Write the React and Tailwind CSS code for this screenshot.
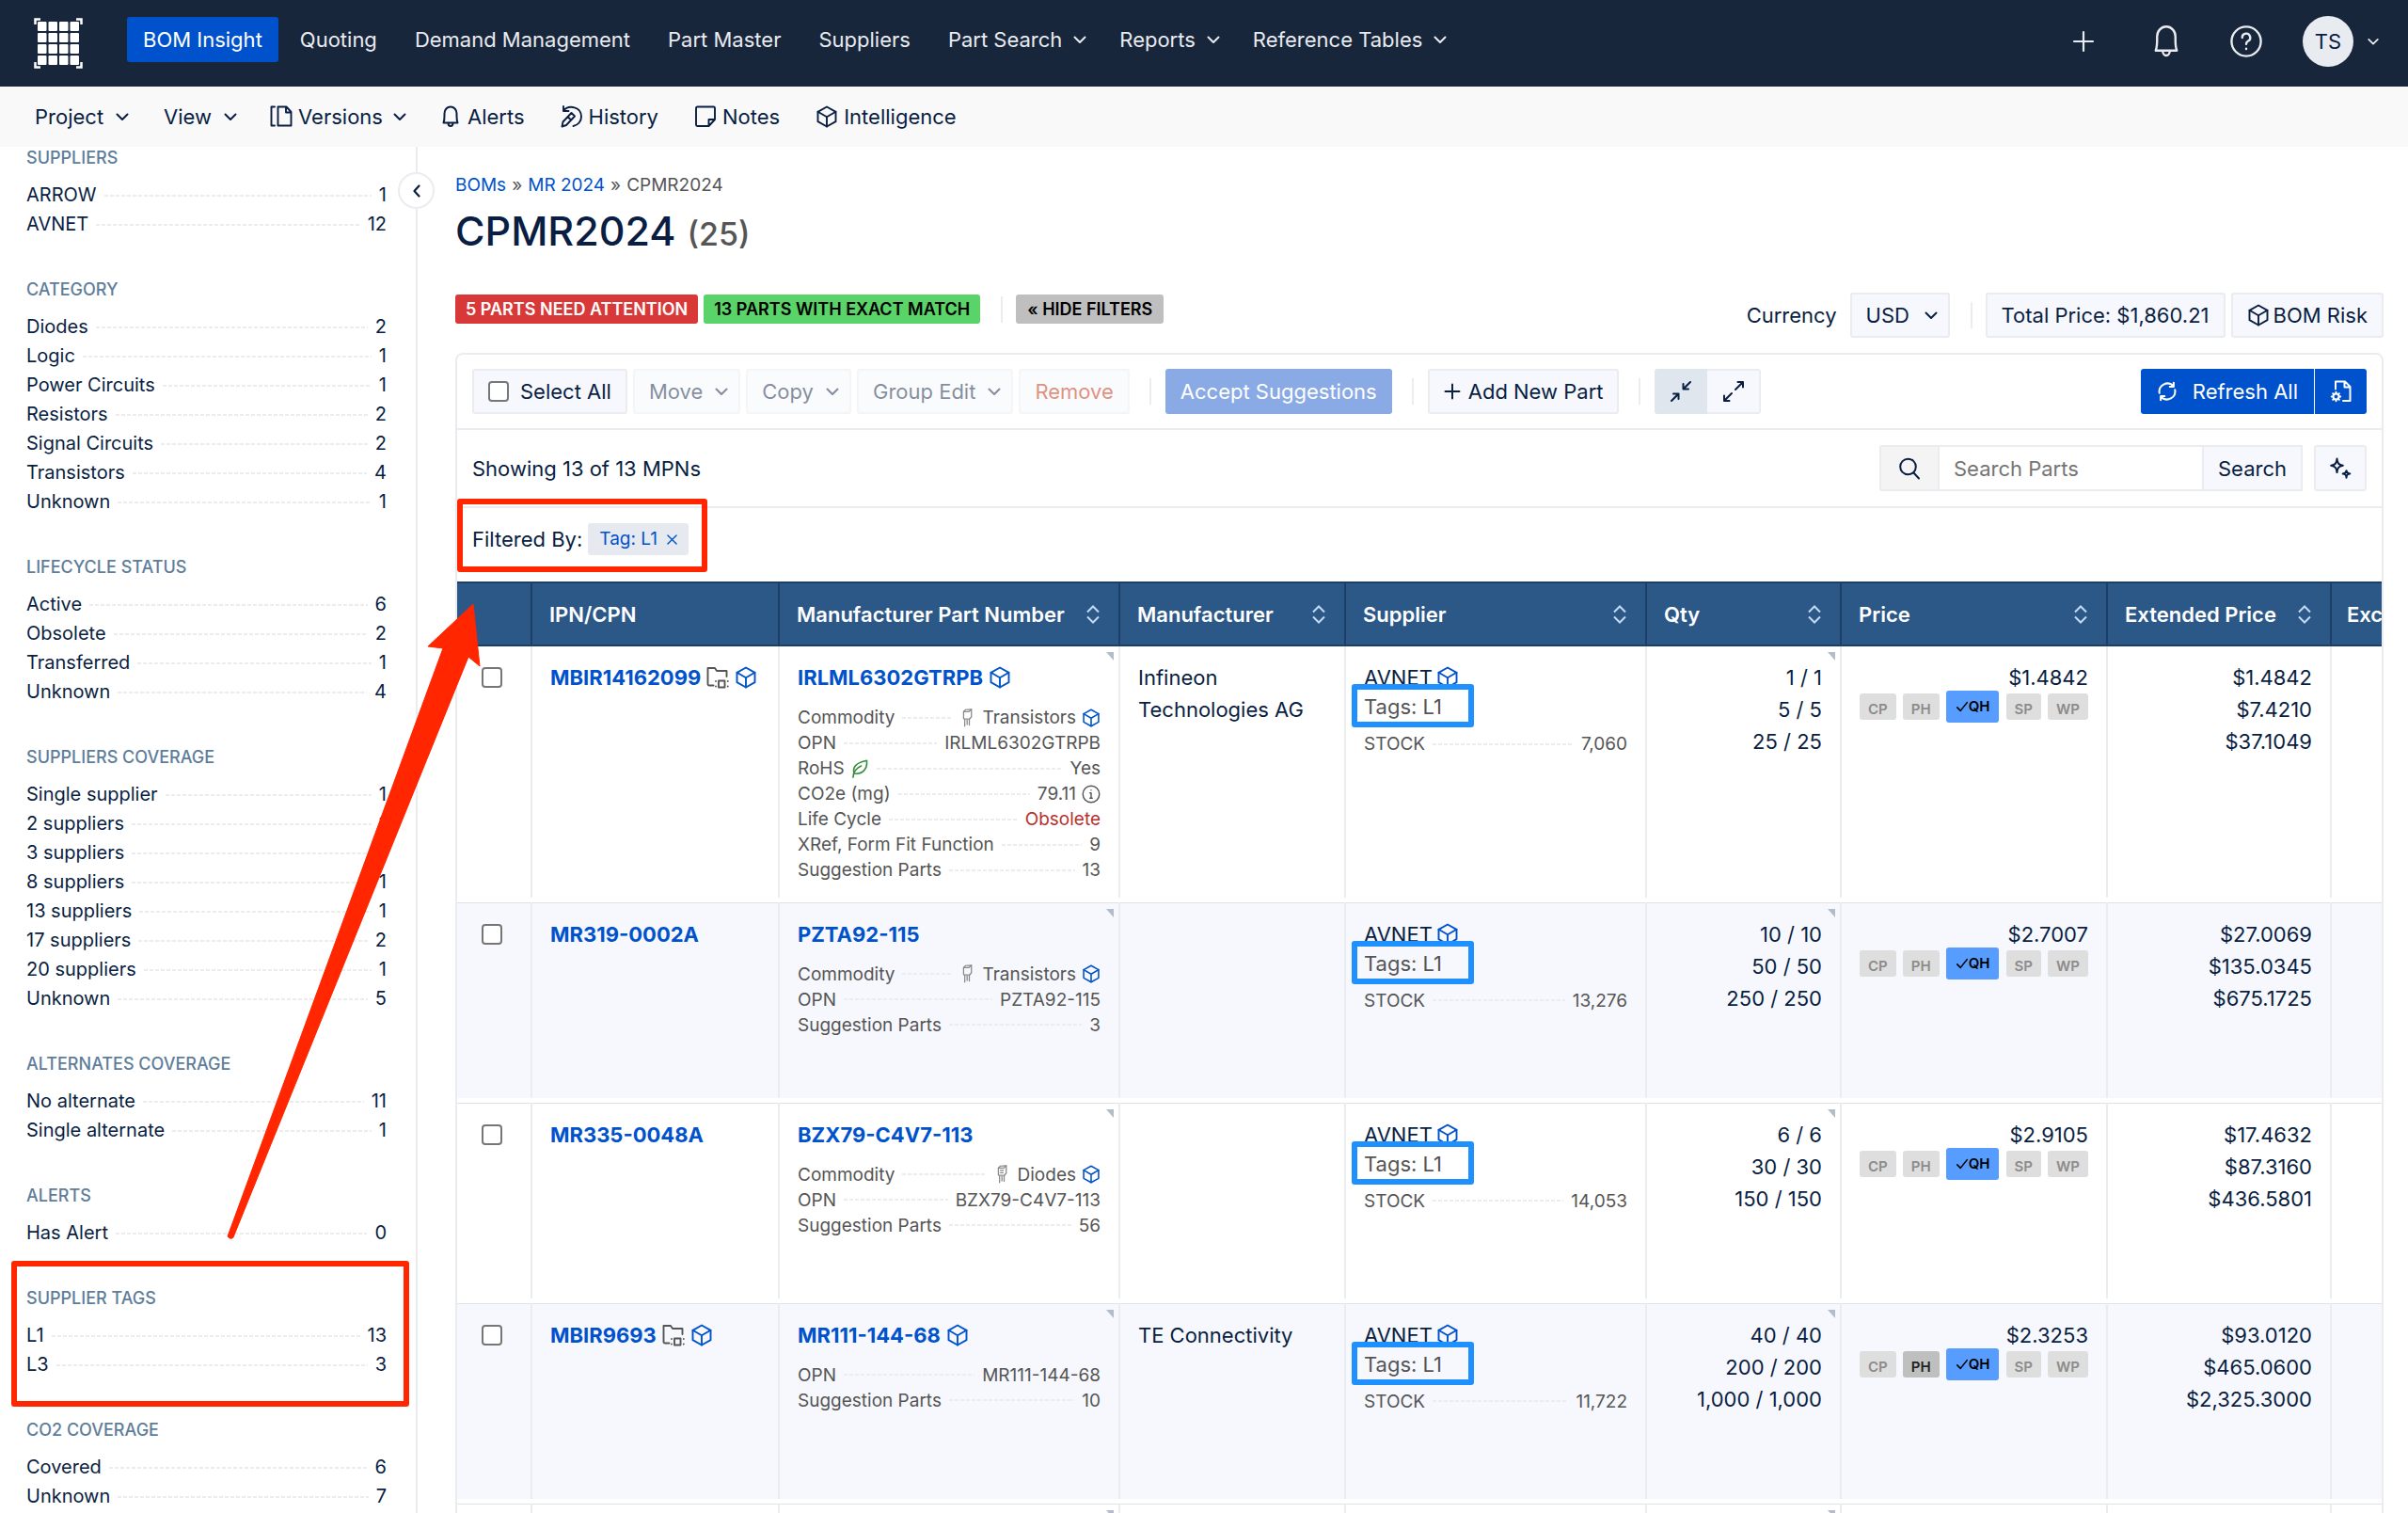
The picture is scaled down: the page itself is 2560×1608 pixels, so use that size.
const filterGroups = [
  { title: "Suppliers", items: [["ARROW", 1], ["AVNET", 12]] },
  {
    title: "Category",
    items: [
      ["Diodes", 2],
      ["Logic", 1],
      ["Power Circuits", 1],
      ["Resistors", 2],
      ["Signal Circuits", 2],
      ["Transistors", 4],
      ["Unknown", 1],
    ],
  },
  {
    title: "Lifecycle Status",
    items: [["Active", 6], ["Obsolete", 2], ["Transferred", 1], ["Unknown", 4]],
  },
  {
    title: "Suppliers Coverage",
    items: [
      ["Single supplier", 1],
      ["2 suppliers", 1],
      ["3 suppliers", 1],
      ["8 suppliers", 1],
      ["13 suppliers", 1],
      ["17 suppliers", 2],
      ["20 suppliers", 1],
      ["Unknown", 5],
    ],
  },
  { title: "Alternates Coverage", items: [["No alternate", 11], ["Single alternate", 1]] },
  { title: "Alerts", items: [["Has Alert", 0]] },
  { title: "Supplier Tags", items: [["L1", 13], ["L3", 3]], marked: true },
  { title: "CO2 Coverage", items: [["Covered", 6], ["Unknown", 7]] },
];

const parts = [
  {
    ipn: "MBIR14162099",
    linked: true,
    mpn: "IRLML6302GTRPB",
    mpnCube: true,
    manufacturer: "Infineon Technologies AG",
    details: [
      { label: "Commodity", value: "Transistors", kind: "transistor" },
      { label: "OPN", value: "IRLML6302GTRPB" },
      { label: "RoHS", value: "Yes", kind: "rohs" },
      { label: "CO2e (mg)", value: "79.11", kind: "info" },
      { label: "Life Cycle", value: "Obsolete", kind: "danger" },
      { label: "XRef, Form Fit Function", value: "9" },
      { label: "Suggestion Parts", value: "13" },
    ],
    stock: "7,060",
    qty: ["1 / 1", "5 / 5", "25 / 25"],
    price: "$1.4842",
    extended: ["$1.4842", "$7.4210", "$37.1049"],
  },
  {
    ipn: "MR319-0002A",
    mpn: "PZTA92-115",
    details: [
      { label: "Commodity", value: "Transistors", kind: "transistor" },
      { label: "OPN", value: "PZTA92-115" },
      { label: "Suggestion Parts", value: "3" },
    ],
    stock: "13,276",
    qty: ["10 / 10", "50 / 50", "250 / 250"],
    price: "$2.7007",
    extended: ["$27.0069", "$135.0345", "$675.1725"],
  },
  {
    ipn: "MR335-0048A",
    mpn: "BZX79-C4V7-113",
    details: [
      { label: "Commodity", value: "Diodes", kind: "diode" },
      { label: "OPN", value: "BZX79-C4V7-113" },
      { label: "Suggestion Parts", value: "56" },
    ],
    stock: "14,053",
    qty: ["6 / 6", "30 / 30", "150 / 150"],
    price: "$2.9105",
    extended: ["$17.4632", "$87.3160", "$436.5801"],
  },
  {
    ipn: "MBIR9693",
    linked: true,
    mpn: "MR111-144-68",
    mpnCube: true,
    manufacturer: "TE Connectivity",
    details: [
      { label: "OPN", value: "MR111-144-68" },
      { label: "Suggestion Parts", value: "10" },
    ],
    stock: "11,722",
    qty: ["40 / 40", "200 / 200", "1,000 / 1,000"],
    price: "$2.3253",
    extended: ["$93.0120", "$465.0600", "$2,325.3000"],
    hasPH: true,
  },
];

const columns = [
  { label: "IPN/CPN" },
  { label: "Manufacturer Part Number", sort: true },
  { label: "Manufacturer", sort: true },
  { label: "Supplier", sort: true },
  { label: "Qty", sort: true },
  { label: "Price", sort: true },
  { label: "Extended Price", sort: true },
  { label: "Exc" },
];

/* Icons */

const Icon = ({ className, box = 24, width = 1.7, children }) => (
  <svg
    viewBox={`0 0 ${box} ${box}`}
    className={`shrink-0 ${className}`}
    fill="none"
    stroke="currentColor"
    strokeWidth={width}
    strokeLinecap="round"
    strokeLinejoin="round"
    aria-hidden="true"
  >
    {children}
  </svg>
);

const Chevron = ({ className = "w-4 h-4" }) => (
  <Icon className={className} box={16} width={2}>
    <path d="M2.5 5.500 8 11l5.500-5.500" />
  </Icon>
);

const Cube = ({ className = "w-6 h-6" }) => (
  <Icon className={className} width={1.9}>
    <path d="M12 1.500 21.500 6.800v10.400L12 22.500 2.500 17.200V6.800z" />
    <path d="M2.500 6.800 12 12.300l9.500-5.500M12 12.300v10.200" />
  </Icon>
);

const Bell = ({ className, width }) => (
  <Icon className={className} width={width}>
    <path d="M4.500 18.500c.8-2 1-4 1-7.500V8.500a6.500 7 0 0 1 13 0V11c0 3.500.2 5.500 1 7.500z" />
    <path d="M9.500 18.800a2.500 3.200 0 0 0 5 0" />
  </Icon>
);

const FolderChip = () => (
  <Icon className="w-6 h-6 text-[#555]" width={1.9}>
    <path d="M7.500 20.500H3A1.500 1.500 0 0 1 1.500 19V2H9l2 3h10.500v6" />
    <path d="M13 15.500h6.500v7H13z" />
    <path d="M10 16v.1M10 21.500v.1M22.800 16v.1M22.800 21.500v.1" />
  </Icon>
);

const Leg = ({ diode }) => (
  <Icon className="w-5 h-5 text-[#888]" width={1.5}>
    <path d="M6.500 4 9 1.500l7.500-.5v9.500L14 13.500l-7.500-.500z" />
    <path d="M6.500 4 13.500 4 16.500 1M8 13.500v9M11 14v6.500M13.800 13.500v7.500" />
    {diode && <path d="M9 7h4M9 10h3.500" />}
  </Icon>
);

const Leaf = () => (
  <Icon className="w-5 h-5 text-[#388e3c]" width={1.9}>
    <path d="M3.500 23c.3-6 3-11.500 10.500-14.500" />
    <path d="M5 18C2 10 8 4 21 1.500 22 12 16 19.500 5 18z" />
  </Icon>
);

const Info = () => (
  <Icon className="w-5 h-5">
    <circle cx="12" cy="12" r="10.500" />
    <path d="M10.500 10.500H12v6.500M10.500 17h3M12 6.800v.2" />
  </Icon>
);

const Sort = () => (
  <svg viewBox="0 0 14 20" className="w-[14px] h-5 shrink-0 text-[#c5dbf5]" fill="none" stroke="currentColor" strokeWidth="2" aria-hidden="true">
    <path d="M1 7.500 7 1.500l6 6M1 12.500l6 6 6-6" />
  </svg>
);

const Logo = () => (
  <svg viewBox="0 0 52 54" className="w-[52px] h-[54px] text-white" fill="none" stroke="currentColor" strokeWidth="2.500" aria-label="Home">
    <path d="M1.500 7V1.500H7M45 1.500h5.500V7M50.500 47v5.500H45M7 52.500H1.500V47" />
    {[5, 17, 29, 41].map((y) =>
      [4, 15.5, 27, 38.5].map((x) => (
        <rect key={`${x}-${y}`} x={x} y={y - 1} width="9.500" height="10" rx="1" fill="currentColor" stroke="none" />
      ))
    )}
  </svg>
);

/* Shared bits */

const Leader = () => (
  <span className="mx-2 h-0.5 min-w-4 flex-1 bg-[repeating-linear-gradient(90deg,#eaecef_0_4px,transparent_4px_6px)]" />
);

const Divider = ({ className = "" }) => <span className={`h-7 w-0.5 shrink-0 bg-[#ebecf0] ${className}`} />;

const Button = ({ className = "", disabled, children, ...rest }) => (
  <button
    {...rest}
    disabled={disabled}
    className={`flex h-12 shrink-0 items-center rounded-[3px] border-2 border-[#ebecf0] bg-[#f6f8fd] pl-[15px] whitespace-nowrap ${
      disabled ? "opacity-50" : ""
    } ${className}`}
  >
    {children}
  </button>
);

const Checkbox = (props) => (
  <input
    type="checkbox"
    {...props}
    className="h-[22px] w-[22px] shrink-0 appearance-none rounded-[4px] border-2 border-[#767676] bg-white"
  />
);

const Corner = () => (
  <svg viewBox="0 0 8 9" className="absolute top-1.5 right-[5px] h-[9px] w-2" aria-hidden="true">
    <path d="M0 0h8v9z" fill="#b3bcc8" />
  </svg>
);

const TopBar = () => (
  <header className="flex h-[92px] items-center bg-[#18263c] pr-[30px] pl-9 text-[#e8ebf0]">
    <a href="#home">
      <Logo />
    </a>
    <nav className="mb-2 ml-[47px] flex gap-1.5">
      <a href="#bom" className="flex h-12 items-center rounded-[3px] bg-[#0052cc] px-[17px] text-white">
        BOM Insight
      </a>
      {["Quoting", "Demand Management", "Part Master", "Suppliers"].map((label) => (
        <a key={label} href="#nav" className="flex h-12 items-center px-[17px]">
          {label}
        </a>
      ))}
      {["Part Search", "Reports", "Reference Tables"].map((label) => (
        <button key={label} className="flex h-12 items-center gap-[11px] pr-[11px] pl-[17px]">
          {label}
          <Chevron />
        </button>
      ))}
    </nav>
    <div className="mb-1 ml-auto flex items-center">
      <button aria-label="Add" className="mr-[58px]">
        <Icon className="h-6 w-6" width={2.2}>
          <path d="M12 2v20M2 12h20" />
        </Icon>
      </button>
      <button aria-label="Notifications" className="mr-[50px]">
        <Bell className="h-9 w-9" width={1.6} />
      </button>
      <button aria-label="Help" className="mr-[43px]">
        <Icon className="h-[34px] w-[34px]" width={1.7}>
          <circle cx="12" cy="12" r="11" />
          <path d="M9 9.200a3 3 0 1 1 4.300 2.600c-.9.500-1.300 1-1.300 2.200M12 17.500v.2" />
        </Icon>
      </button>
      <button className="flex items-center gap-[14px]">
        <span className="flex h-[54px] w-[54px] items-center justify-center rounded-full bg-[#e8ebf0] text-[#091e42]">TS</span>
        <Chevron className="h-[14px] w-[14px]" />
      </button>
    </div>
  </header>
);

const SubNav = () => (
  <nav className="flex h-16 items-center bg-[#f9f9f9] pl-[37px]">
    <button className="mr-9 flex items-center gap-3">
      Project <Chevron />
    </button>
    <button className="mr-[34px] flex items-center gap-3">
      View <Chevron />
    </button>
    <button className="mr-[34px] flex items-center gap-1.5">
      <Icon className="h-6 w-6" width={1.9}>
        <path d="M5 1.500H1.500v20H5M8.500 1.500h9l5 5.500v14.500h-14zM17 1.500v6h5.500" />
      </Icon>
      Versions <Chevron className="ml-1 h-4 w-4" />
    </button>
    <button className="mr-[38px] flex items-center gap-1.5">
      <Bell className="h-6 w-6" width={2} />
      Alerts
    </button>
    <button className="mr-[38px] flex items-center gap-1.5">
      <Icon className="h-6 w-6" width={1.9}>
        <path d="M3 5.500C9-1 22 1.500 22 12c0 5-3.500 9-8.500 10M3 1v5h5.500" />
        <path d="M1.500 22.500l1-5 9-9.500 3.500 3.500-9 9.500zM7.500 12l3.500 3.500" />
      </Icon>
      History
    </button>
    <button className="mr-[38px] flex items-center gap-1.5">
      <Icon className="h-6 w-6" width={1.9}>
        <path d="M3.500 1.500h17a1.500 1.500 0 0 1 1.500 1.500v12l-6.500 7h-12A1.500 1.500 0 0 1 2 20.500V3a1.500 1.500 0 0 1 1.500-1.500zM22 15h-6.500v7" />
      </Icon>
      Notes
    </button>
    <button className="flex items-center gap-1.5">
      <Cube />
      Intelligence
    </button>
  </nav>
);

const Sidebar = () => (
  <aside className="relative w-[444px] shrink-0 border-r-2 border-[#ebecf0] pr-[31px] pl-7">
    {filterGroups.map((group) => (
      <section key={group.title} className="relative mb-[42px]">
        <h2 className="mb-3 text-[18px] leading-6 font-medium text-[#5e7d9a] uppercase">{group.title}</h2>
        <ul>
          {group.items.map(([label, count]) => (
            <li key={label}>
              <button className="flex w-full items-center text-[20px] leading-[31px]">
                {label}
                <Leader />
                {count}
              </button>
            </li>
          ))}
        </ul>
        {group.marked && (
          <span className="pointer-events-none absolute -top-7 -right-6 -left-4 h-[155px] rounded-[3px] border-[6px] border-[#ff2600]" />
        )}
      </section>
    ))}
    <button
      aria-label="Collapse filters"
      className="absolute top-[27px] -right-5 flex h-[39px] w-[39px] items-center justify-center rounded-full border-2 border-[#ebecf0] bg-white"
    >
      <Icon className="h-4 w-4" box={16} width={2.2}>
        <path d="M10.500 2.500 5.500 8l5 5.500" />
      </Icon>
    </button>
  </aside>
);

const Heading = () => (
  <>
    <nav aria-label="Breadcrumb" className="mt-[26px] flex gap-1.5 text-[19px] leading-[30px] text-[#555]">
      <a href="#boms" className="text-[#0052cc]">BOMs</a>
      <span>»</span>
      <a href="#mr" className="text-[#0052cc]">MR 2024</a>
      <span>»</span>
      <span>CPMR2024</span>
    </nav>
    <h1 className="mt-1.5 flex items-baseline gap-3 text-[43px] leading-[54px] font-medium">
      CPMR2024 <span className="text-[34px] leading-10 text-[#555]">(25)</span>
    </h1>
    <div className="mt-[39px] flex items-start">
      <div className="mt-0.5 flex items-center gap-1.5 text-[18px] leading-[31px] font-semibold text-black">
        <button className="rounded-[3px] bg-[#d93838] px-[11px] text-white">5 PARTS NEED ATTENTION</button>
        <button className="rounded-[3px] bg-[#5ad368] px-[11px]">13 PARTS WITH EXACT MATCH</button>
        <Divider className="mr-2 ml-4" />
        <button className="rounded-[3px] bg-[#bfbfbf] px-3">« HIDE FILTERS</button>
      </div>
      <div className="ml-auto flex items-center gap-1.5">
        <label htmlFor="currency" className="mr-2">Currency</label>
        <div className="relative">
          <select
            id="currency"
            defaultValue="USD"
            className="h-12 w-[106px] appearance-none rounded-[3px] border-2 border-[#ebecf0] bg-[#f6f8fd] pl-[15px]"
          >
            <option>USD</option>
            <option>EUR</option>
          </select>
          <Chevron className="pointer-events-none absolute top-4 right-3 h-4 w-4" />
        </div>
        <Divider className="mr-2 ml-4" />
        <Button className="pr-[15px]">Total Price: $1,860.21</Button>
        <Button className="gap-1 pr-[15px]">
          <Cube />
          BOM Risk
        </Button>
      </div>
    </div>
  </>
);

const Toolbar = () => (
  <div className="flex items-center gap-1.5 px-4 py-[15px]">
    <label className="flex h-12 items-center gap-3 rounded-[3px] border-2 border-[#ebecf0] bg-[#f6f8fd] px-[15px]">
      <Checkbox />
      Select All
    </label>
    {["Move", "Copy", "Group Edit"].map((label) => (
      <Button key={label} disabled className="gap-3 pr-2.5">
        {label}
        <Chevron />
      </Button>
    ))}
    <Button disabled className="pr-[15px] text-[#bf2600]">Remove</Button>
    <div className="ml-[15px] flex items-center gap-[15px]">
      <Divider />
      <button disabled className="h-12 rounded-[3px] bg-[#8aaae6] px-4 text-white">Accept Suggestions</button>
      <Divider className="ml-1.5" />
      <Button className="gap-2 pr-[15px]">
        <Icon className="h-[18px] w-[18px]" width={2.6}>
          <path d="M12 2v20M2 12h20" />
        </Icon>
        Add New Part
      </Button>
      <Divider className="ml-1.5" />
      <div className="flex">
        <button aria-label="Collapse rows" className="flex h-12 w-14 items-center justify-center rounded-l-[3px] bg-[#dfe6ee]">
          <Icon className="h-6 w-6" width={2}>
            <path d="M22 2l-7.500 7.500M14.500 4v5.500H20M2 22l7.500-7.500M9.500 20v-5.500H4" />
          </Icon>
        </button>
        <button
          aria-label="Expand rows"
          className="flex h-12 w-[57px] items-center justify-center rounded-r-[3px] border-2 border-l-0 border-[#ebecf0] bg-[#f6f8fd]"
        >
          <Icon className="h-6 w-6" width={2}>
            <path d="M14 10l8-8M16.500 2H22v5.500M10 14l-8 8M2 16.500V22h5.500" />
          </Icon>
        </button>
      </div>
    </div>
    <div className="ml-auto flex gap-px text-white">
      <button className="flex h-12 items-center gap-4 rounded-l-[3px] bg-[#0052cc] px-[17px]">
        <Icon className="h-[22px] w-[22px]" width={2.2}>
          <path d="M3 14A9.500 9.500 0 0 1 19 5.500M21 10a9.500 9.500 0 0 1-16 8.500M19.500 2v4.500H15M4.500 22v-4.500H9" />
        </Icon>
        Refresh All
      </button>
      <button aria-label="Refresh settings" className="flex h-12 w-[55px] items-center justify-center rounded-r-[3px] bg-[#0052cc]">
        <Icon className="h-6 w-6" width={2}>
          <path d="M6 9.500V1.500h10l5.500 5.500V22H14M15.500 1.500V7.500h6" />
          <circle cx="6.500" cy="17.500" r="3" />
          <path d="M6.500 12.800v1M6.500 21.200v1M1.800 17.500h1M10.200 17.500h1M3.200 14.200l.8.800M9 20l.8.800M9.800 14.200l-.8.800M4 20l-.8.800" />
        </Icon>
      </button>
    </div>
  </div>
);

const SearchRow = () => (
  <div className="flex items-center border-t-2 border-[#ebecf0] px-4 py-4">
    <p>Showing 13 of 13 MPNs</p>
    <form className="ml-auto flex h-[49px]">
      <label htmlFor="search" aria-label="Search Parts" className="flex w-[62px] items-center justify-center rounded-l-[3px] border-2 border-r-0 border-[#ebecf0] bg-[#f4f4f4]">
        <Icon className="h-6 w-6" width={2}>
          <circle cx="10.500" cy="10" r="8.300" />
          <path d="M16.500 16.500 22 22.500" />
        </Icon>
      </label>
      <input
        id="search"
        type="text"
        placeholder="Search Parts"
        className="w-[283px] border-2 border-[#ebecf0] px-[15px] placeholder:text-[#757575]"
      />
      <button type="button" className="border-y-2 border-r-2 border-[#ebecf0] bg-[#f6f8fd] px-[15px]">
        Search
      </button>
      <button
        type="button"
        aria-label="Smart search"
        className="ml-3 flex w-14 items-center justify-center rounded-[3px] border-2 border-[#ebecf0] bg-[#f6f8fd]"
      >
        <Icon className="h-6 w-6" width={2}>
          <path d="M8.500 1.500c.5 5 1.800 6.600 6.300 7.300-4.500.7-5.800 2.300-6.300 7.300-.5-5-1.800-6.600-6.300-7.300 4.500-.7 5.800-2.300 6.300-7.300z" />
          <path d="M18.500 14.200c.2 2.300 1 3 3.800 3.300-2.800.3-3.600 1-3.800 4.300-.2-3.300-1-4-3.800-4.300 2.800-.3 3.600-1 3.800-3.300z" />
        </Icon>
      </button>
    </form>
  </div>
);

const FilterRow = () => (
  <div className="relative flex h-20 items-center gap-1.5 border-t-2 border-[#ebecf0] px-4 pb-3">
    <span>Filtered By:</span>
    <button className="flex h-[34px] items-center gap-2.5 rounded-[3px] bg-[#e6eaf0] px-3 text-[19px] text-[#0052cc]">
      Tag: L1
      <Icon className="h-[11px] w-[11px]" width={3}>
        <path d="M2 2l20 20M22 2 2 22" />
      </Icon>
    </button>
    <span className="pointer-events-none absolute -top-2.5 left-0 h-[78px] w-[266px] rounded-[3px] border-[6px] border-[#ff2600]" />
  </div>
);

const DetailList = ({ details }) => (
  <ul className="mt-3 text-[19px] leading-[27px] text-[#555]">
    {details.map((d) => (
      <li key={d.label} className="flex items-center whitespace-nowrap">
        {d.label}
        {d.kind === "rohs" && (
          <span className="ml-1.5">
            <Leaf />
          </span>
        )}
        <Leader />
        <span className={`flex items-center gap-1.5 ${d.kind === "danger" ? "text-[#b8312f]" : ""}`}>
          {(d.kind === "transistor" || d.kind === "diode") && <Leg diode={d.kind === "diode"} />}
          {d.value}
          {(d.kind === "transistor" || d.kind === "diode") && <Cube className="h-5 w-5 text-[#0052cc]" />}
          {d.kind === "info" && <Info />}
        </span>
      </li>
    ))}
  </ul>
);

const PriceSources = ({ hasPH }) => (
  <div className="flex h-7 items-center justify-between text-[15px] font-semibold text-[#8c8c8c]">
    <button className="h-7 rounded-[3px] bg-[#dedede] px-[9px]">CP</button>
    <button className={`h-7 rounded-[3px] px-[9px] ${hasPH ? "bg-[#bfbfbf] text-[#222]" : "bg-[#dedede]"}`}>PH</button>
    <button className="flex h-[34px] shrink-0 items-center rounded-[3px] bg-[#579dff] px-2.5 text-black">
      <Icon className="h-[14px] w-[14px]" box={16} width={1.8}>
        <path d="M2 9l4 4 8-10" />
      </Icon>
      QH
    </button>
    <button className="h-7 rounded-[3px] bg-[#dedede] px-[9px]">SP</button>
    <button className="h-7 rounded-[3px] bg-[#dedede] px-[9px]">WP</button>
  </div>
);

const cell = "relative border-l-2 border-[#ebecf0] pr-[19px] pl-[19px] pt-4 align-top leading-[34px]";

const PartRow = ({ part, index }) => (
  <>
    <tr className={`${index === 0 ? "h-[268px]" : "h-[208px]"} ${index % 2 ? "bg-[#f6f8fd]" : "bg-white"}`}>
      <td className="pt-[22px] pl-[26px] align-top leading-[0]">
        <Checkbox aria-label={`Select ${part.ipn}`} />
      </td>
      <td className={cell}>
        <span className="flex items-center gap-1.5">
          <a href="#ipn" className="font-bold text-[#0052cc]">{part.ipn}</a>
          {part.linked && <FolderChip />}
          {part.linked && <Cube className="h-6 w-6 text-[#0052cc]" />}
        </span>
      </td>
      <td className={cell}>
        <Corner />
        <span className="flex items-center gap-1.5">
          <a href="#mpn" className="font-bold text-[#0052cc]">{part.mpn}</a>
          {part.mpnCube && <Cube className="h-6 w-6 text-[#0052cc]" />}
        </span>
        <DetailList details={part.details} />
      </td>
      <td className={cell}>{part.manufacturer}</td>
      <td className={cell}>
        <span className="flex items-center gap-1">
          AVNET
          <Cube className="h-6 w-6 text-[#0052cc]" />
        </span>
        <div className="relative leading-7 text-[#555]">
          Tags: L1
          <span className="pointer-events-none absolute -top-[10px] -left-[13px] h-[46px] w-[130px] rounded-[3px] border-[6px] border-[#1e90ff]" />
        </div>
        <DetailList details={[{ label: "STOCK", value: part.stock }]} />
      </td>
      <td className={`${cell} text-right`}>
        <Corner />
        {part.qty.map((q) => (
          <div key={q}>{q}</div>
        ))}
      </td>
      <td className={`${cell} text-right`}>
        {part.price}
        <PriceSources hasPH={part.hasPH} />
      </td>
      <td className={`${cell} text-right`}>
        {part.extended.map((p) => (
          <div key={p}>{p}</div>
        ))}
      </td>
      <td className={cell}></td>
    </tr>
    <tr className="h-[5px]">
      <td colSpan={9} className="border-b border-[#dfe1e6]"></td>
    </tr>
  </>
);

const PartsTable = () => (
  <div className="overflow-hidden">
    <table className="w-full table-fixed">
      <colgroup>
        <col className="w-[79px]" />
        <col className="w-[263px]" />
        <col className="w-[362px]" />
        <col className="w-[240px]" />
        <col className="w-[320px]" />
        <col className="w-[207px]" />
        <col className="w-[283px]" />
        <col className="w-[238px]" />
        <col />
      </colgroup>
      <thead className="bg-[#2c5888] text-white">
        <tr className="h-[67px]">
          <th className="border-y-2 border-[#1d3f66]" aria-label="Select"></th>
          {columns.map((col) => (
            <th
              key={col.label}
              className="border-y-2 border-l-2 border-[#1d3f66] pr-5 pl-[18px] text-left font-semibold whitespace-nowrap last:pr-0 last:pl-4"
            >
              <span className="flex items-center justify-between">
                {col.label}
                {col.sort && (
                  <button aria-label={`Sort by ${col.label}`}>
                    <Sort />
                  </button>
                )}
              </span>
            </th>
          ))}
        </tr>
      </thead>
      <tbody>
        {parts.map((part, i) => (
          <PartRow key={part.ipn} part={part} index={i} />
        ))}
        {/* next row, still loading */}
        <tr className="h-[208px]">
          <td></td>
          {columns.map((col) => (
            <td key={col.label} className={cell}>
              {(col.label === "Manufacturer Part Number" || col.label === "Qty") && <Corner />}
            </td>
          ))}
        </tr>
      </tbody>
    </table>
  </div>
);

// Callout arrow from the supplier tags filter to the active filter chip
const Arrow = () => (
  <svg viewBox="0 0 280 690" className="pointer-events-none absolute top-[636px] left-[236px] h-[690px] w-[280px]" aria-hidden="true">
    <path
      d="M267 6 274 72 262 62 12 679q-3 3-6-1L235 53 219 51z"
      fill="#ff2600"
      stroke="#ff2600"
      strokeWidth="1"
      strokeLinejoin="round"
    />
  </svg>
);

export default function App() {
  return (
    <div className="relative h-screen overflow-hidden bg-white font-['Inter',sans-serif] text-[22px] leading-[30px] text-[#091e42]">
      <TopBar />
      <SubNav />
      <div className="flex">
        <Sidebar />
        <main className="min-w-0 flex-1 pr-[26px] pl-10">
          <Heading />
          <div className="mt-4 rounded-t-lg border-2 border-[#ebecf0]">
            <Toolbar />
            <SearchRow />
            <FilterRow />
            <PartsTable />
          </div>
        </main>
      </div>
      <Arrow />
    </div>
  );
}
